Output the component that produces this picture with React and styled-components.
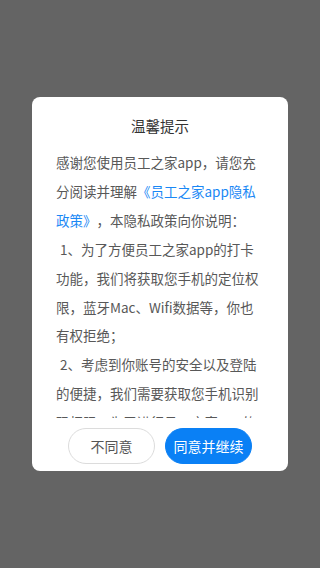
import React from "react";
import styled, { createGlobalStyle } from "styled-components";

const GlobalStyle = createGlobalStyle`
  html, body {
    margin: 0;
    padding: 0;
    height: 100%;
  }
  body {
    font-family: "Noto Sans CJK SC", "Noto Sans", sans-serif;
    text-spacing-trim: space-all;
  }
  #root {
    height: 100%;
  }
`;

const Mask = styled.div`
  width: 100%;
  height: 100%;
  min-height: 568px;
  background: #646464;
  display: flex;
  justify-content: center;
  align-items: center;
`;

const Dialog = styled.div`
  width: 256px;
  height: 374px;
  box-sizing: border-box;
  background: #fff;
  border-radius: 8px;
  padding: 18px 24px 7px;
  display: flex;
  flex-direction: column;
`;

const Title = styled.h2`
  margin: 0;
  height: 22px;
  line-height: 22px;
  font-size: 14.5px;
  font-weight: 400;
  color: #333;
  text-align: center;
`;

const Content = styled.div`
  margin-top: 11px;
  height: 270px;
  overflow: hidden;
  font-size: 13.5px;
  line-height: 28.9px;
  color: #585858;
  text-spacing-trim: space-all;
`;

const Para = styled.p`
  margin: 0;
  text-indent: ${({ $indent }) => ($indent ? "4px" : "0")};
`;

const Link = styled.span`
  color: #1a88f5;
`;

const Footer = styled.div`
  margin-top: 10px;
  display: flex;
  justify-content: center;
  gap: 10px;
`;

const Button = styled.button`
  width: 87px;
  height: 36px;
  border-radius: 18px;
  box-sizing: border-box;
  font-family: inherit;
  font-size: 14px;
  padding: 0;
  cursor: pointer;
  border: 1px solid ${({ $primary }) => ($primary ? "#0a80f5" : "#dcdcdc")};
  background: ${({ $primary }) => ($primary ? "#0a80f5" : "#fff")};
  color: ${({ $primary }) => ($primary ? "#fff" : "#555")};
`;

export default function App() {
  return (
    <>
      <GlobalStyle />
      <Mask>
        <Dialog>
          <Title>温馨提示</Title>
          <Content>
            <Para>
              感谢您使用员工之家app，请您充分阅读并理解
              <Link>《员工之家app隐私政策》</Link>
              ，本隐私政策向你说明：
            </Para>
            <Para $indent>
              1、为了方便员工之家app的打卡功能，我们将获取您手机的定位权限，蓝牙Mac、Wifi数据等，你也有权拒绝；
            </Para>
            <Para $indent>
              2、考虑到你账号的安全以及登陆的便捷，我们需要获取您手机识别码权限，为了进行员工之家app的
            </Para>
          </Content>
          <Footer>
            <Button>不同意</Button>
            <Button $primary>同意并继续</Button>
          </Footer>
        </Dialog>
      </Mask>
    </>
  );
}
